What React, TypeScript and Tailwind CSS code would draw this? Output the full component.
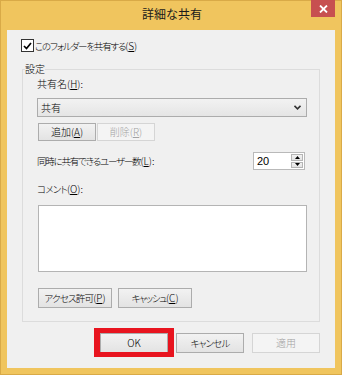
import React from "react";

function Btn({
  className = "",
  disabled = false,
  children,
}: {
  className?: string;
  disabled?: boolean;
  children: React.ReactNode;
}) {
  return (
    <div
      className={
        "relative flex items-center justify-center border " +
        (disabled
          ? "border-[#d5d5d5] bg-[#f4f4f4] text-[#a2a2a2] "
          : "border-[#acacac] bg-linear-to-b from-[#f2f2f2] to-[#e3e3e3] text-black ") +
        className
      }
    >
      {children}
    </div>
  );
}

function U({ children }: { children: React.ReactNode }) {
  return <span className="underline underline-offset-[1px]">{children}</span>;
}

export default function App() {
  return (
    <div className="w-[342px] h-[375px] bg-[#f0c55e] border border-[#d9aa47] flex flex-col font-['Noto_Sans_CJK_JP',sans-serif] font-light text-[10px] leading-[12px] text-black [font-feature-settings:'palt']">
      {/* Title bar */}
      <div className="relative h-[29px] shrink-0 flex items-center justify-center">
        <span className="text-[12px] leading-[16px] font-normal text-[#1a1a1a] mb-[4px] ml-[2px]">詳細な共有</span>
        <div className="absolute right-[6px] top-[-1px] w-[24px] h-[17px] bg-[#c75050] flex items-center justify-center">
          <svg width="9" height="8" viewBox="0 0 9 8">
            <path d="M1 0.5 L8 7.5 M8 0.5 L1 7.5" stroke="#ffffff" strokeWidth="1.8" />
          </svg>
        </div>
      </div>

      {/* Client area */}
      <div className="mx-[6px] h-[338px] shrink-0 bg-[#f0f0f0] flex flex-col pl-[14px]">
        {/* Checkbox row */}
        <div className="mt-[9px] h-[13px] flex items-center">
          <div className="w-[13px] h-[13px] border border-[#333333] bg-white flex items-center justify-center">
            <svg width="9" height="8" viewBox="0 0 9 8">
              <path d="M1 4 L3.5 6.5 L8 1" fill="none" stroke="#000000" strokeWidth="1.7" />
            </svg>
          </div>
          <span className="ml-[1px]">
            <span className="text-[9.5px] tracking-[-1.2px]">このフォルダーを共有する</span>(<U>S</U>)
          </span>
        </div>

        {/* Group box */}
        <div className="relative mt-[17px] ml-[1px] w-[298px] h-[253px] border border-[#dcdcdc] pl-[14px] pt-[8px] flex flex-col">
          <span className="absolute top-[-7px] left-[2px] bg-[#f0f0f0]">設定</span>

          <span className="h-[12px]">
            共有名(<U>H</U>):
          </span>

          <div className="mt-[8px] w-[270px] h-[19px] border border-[#acacac] bg-linear-to-b from-[#f2f2f2] to-[#e5e5e5] flex items-center pl-[3px] pr-[5px]">
            <span className="flex-1">共有</span>
            <svg width="7" height="5" viewBox="0 0 7 5">
              <path d="M0.5 0.8 L3.5 3.8 L6.5 0.8" fill="none" stroke="#333333" strokeWidth="1.6" />
            </svg>
          </div>

          <div className="mt-[6px] ml-[1px] flex gap-[1px]">
            <Btn className="w-[58px] h-[18px]">
              追加(<U>A</U>)
            </Btn>
            <Btn className="w-[58px] h-[18px]" disabled>
              削除(<U>R</U>)
            </Btn>
          </div>

          <div className="mt-[11px] w-[268px] h-[18px] flex items-center justify-between">
            <span>
              <span className="text-[9.5px] tracking-[-1.2px]">同時に共有できるユーザー数</span>(<U>L</U>):
            </span>
            <div className="w-[52px] h-[18px] border border-[#b9b9b9] bg-white flex">
              <span className="flex-1 pl-[3px] text-[11px] leading-[16px] font-normal font-['Liberation_Sans',sans-serif]">20</span>
              <div className="w-[14px] flex flex-col gap-[1px] p-[1px]">
                <div className="flex-1 border border-[#b5b5b5] bg-linear-to-b from-[#f2f2f2] to-[#e3e3e3] flex items-center justify-center">
                  <svg width="5" height="3" viewBox="0 0 5 3">
                    <path d="M0 3 L2.5 0 L5 3 Z" fill="#000000" />
                  </svg>
                </div>
                <div className="flex-1 border border-[#b5b5b5] bg-linear-to-b from-[#f2f2f2] to-[#e3e3e3] flex items-center justify-center">
                  <svg width="5" height="3" viewBox="0 0 5 3">
                    <path d="M0 0 L2.5 3 L5 0 Z" fill="#000000" />
                  </svg>
                </div>
              </div>
            </div>
          </div>

          <span className="mt-[13px] h-[12px]">
            <span className="text-[9.5px] tracking-[-0.8px]">コメント</span>(<U>O</U>):
          </span>

          <div className="mt-[10px] ml-[1px] w-[269px] h-[67px] border border-[#b4b4b4] bg-white" />

          <div className="mt-[16px] ml-[1px] flex gap-[6px]">
            <Btn className="w-[74px] h-[20px]">
              <span className="text-[9.5px] tracking-[-0.8px]">アクセス許可</span>(<U>P</U>)
            </Btn>
            <Btn className="w-[74px] h-[20px]">
              <span className="text-[9.5px] tracking-[-1.3px]">キャッシュ</span>(<U>C</U>)
            </Btn>
          </div>
        </div>

        {/* Bottom buttons */}
        <div className="mt-[11px] mr-[15px] flex justify-end gap-[8px]">
          <Btn className="w-[68px] h-[20px]">
            OK
            <div className="absolute -top-[6px] -bottom-[5px] -left-[7px] -right-[7px] border-x-[6px] border-y-[5px] border-[#e8141f]" />
          </Btn>
          <Btn className="w-[68px] h-[20px] text-[9.5px] tracking-[-0.8px]">キャンセル</Btn>
          <Btn className="w-[68px] h-[20px]" disabled>
            適用
          </Btn>
        </div>
      </div>
    </div>
  );
}
